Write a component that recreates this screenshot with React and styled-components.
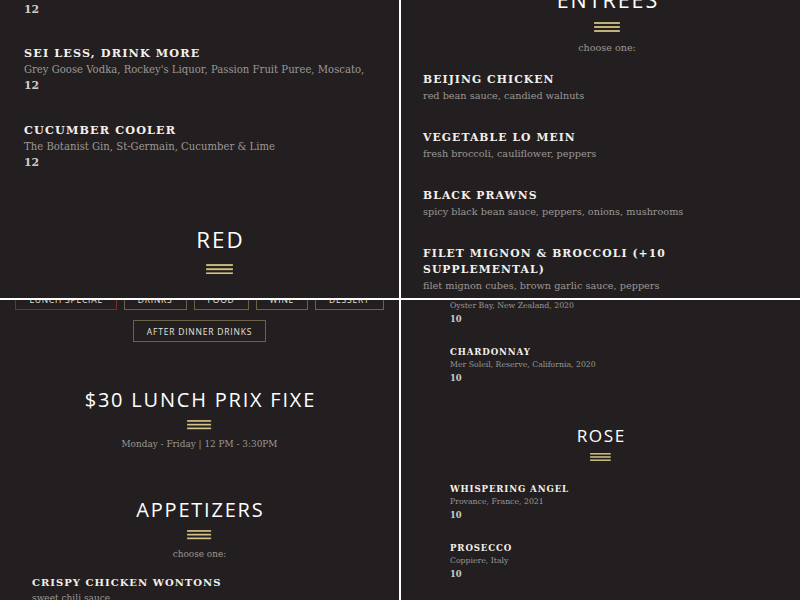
import React from 'react'
import styled, {createGlobalStyle} from 'styled-components'

const GlobalStyle = createGlobalStyle`
    html, body {
        margin: 0;
        padding: 0;
        background: #ffffff;
        overflow: hidden;
    }
    #root {
        width: 800px;
        height: 600px;
    }
`;

// each panel is one crop of the same long menu page, at its own scroll and scale
const panels = {
    drinks: {unit: 10.4, width: 439, scroll: 1.5, inset: 24, gap: 5.15},
    entrees: {unit: 10, width: 412, scroll: -15, inset: 22, gap: 4.85},
    lunch: {unit: 9.3, width: 399, scroll: -12, inset: 32, gap: 4.75},
    wine: {unit: 8, width: 399, scroll: 0, inset: 49, gap: 4.85},
};

const navLinks = [
    {label: 'Lunch Special', active: true},
    {label: 'Drinks'},
    {label: 'Food'},
    {label: 'Wine'},
    {label: 'Dessert'},
    {label: 'After Dinner Drinks'},
];

const Ornament = () => (
    <OrnamentSvg viewBox="0 0 26 10" preserveAspectRatio="none">
        {[0, 4, 8].map(y => (
            <g key={y}>
                <rect x="0" y={y} width="26" height="2" fill="#a3905a"/>
                <rect x="0.5" y={y + 0.5} width="25" height="1" fill="#ddcf9a"/>
            </g>
        ))}
    </OrnamentSvg>
);

const MenuItem = ({name, desc, price}) => (
    <Item>
        {name && <Name>{name}</Name>}
        {desc && <Desc>{desc}</Desc>}
        {price && <Price>{price}</Price>}
    </Item>
);

const ItemList = ({inset, spacing, items}) => (
    <List $inset={inset} $spacing={spacing}>
        {items.map((it, i) => <MenuItem key={i} {...it}/>)}
    </List>
);

const Heading = ({title, note, gap}) => (
    <Section $gap={gap}>
        <Title>{title}</Title>
        <Ornament/>
        {note && <Note>{note}</Note>}
    </Section>
);

export default function App() {
    const {drinks, entrees, lunch, wine} = panels;
    return (
        <Board>
            <GlobalStyle/>

            <Panel $unit={drinks.unit}>
                <Page $width={drinks.width} $scroll={drinks.scroll}>
                    <ItemList inset={drinks.inset} spacing={0} items={[
                        {price: '12'},
                        {name: 'Sei Less, Drink More', desc: "Grey Goose Vodka, Rockey's Liquor, Passion Fruit Puree, Moscato,", price: '12'},
                        {name: 'Cucumber Cooler', desc: 'The Botanist Gin, St-Germain, Cucumber & Lime', price: '12'},
                    ]}/>
                    <Heading title="Red" gap={drinks.gap}/>
                </Page>
            </Panel>

            <Panel $unit={entrees.unit}>
                <Page $width={entrees.width} $scroll={entrees.scroll}>
                    <Heading title="Entrees" note="choose one:" gap={0}/>
                    <ItemList inset={entrees.inset} spacing={1.65} items={[
                        {name: 'Beijing Chicken', desc: 'red bean sauce, candied walnuts'},
                        {name: 'Vegetable Lo Mein', desc: 'fresh broccoli, cauliflower, peppers'},
                        {name: 'Black Prawns', desc: 'spicy black bean sauce, peppers, onions, mushrooms'},
                        {name: 'Filet Mignon & Broccoli (+10 Supplemental)', desc: 'filet mignon cubes, brown garlic sauce, peppers'},
                    ]}/>
                </Page>
            </Panel>

            <Panel $unit={lunch.unit}>
                <Page $width={lunch.width} $scroll={lunch.scroll}>
                    <Nav>
                        {navLinks.map(l => (
                            <NavButton key={l.label} $active={l.active}>{l.label}</NavButton>
                        ))}
                    </Nav>
                    <Heading title="$30 Lunch Prix Fixe" note="Monday - Friday | 12 PM - 3:30PM" gap={lunch.gap}/>
                    <Heading title="Appetizers" note="choose one:" gap={lunch.gap}/>
                    <ItemList inset={lunch.inset} spacing={1.5} items={[
                        {name: 'Crispy Chicken Wontons', desc: 'sweet chili sauce'},
                    ]}/>
                </Page>
            </Panel>

            <Panel $unit={wine.unit}>
                <Page $width={wine.width} $scroll={wine.scroll}>
                    <ItemList inset={wine.inset} spacing={0} items={[
                        {desc: 'Oyster Bay, New Zealand, 2020', price: '10'},
                        {name: 'Chardonnay', desc: 'Mer Soleil, Reserve, California, 2020', price: '10'},
                    ]}/>
                    <Heading title="Rose" gap={wine.gap}/>
                    <ItemList inset={wine.inset} spacing={2.8} items={[
                        {name: 'Whispering Angel', desc: 'Provance, France, 2021', price: '10'},
                        {name: 'Prosecco', desc: 'Coppiere, Italy', price: '10'},
                    ]}/>
                </Page>
            </Panel>
        </Board>
    )
}

const Board = styled.div`
    display: grid;
    grid-template-columns: 399px 399px;
    grid-template-rows: 298px 300px;
    gap: 2px;
    width: 800px;
    height: 600px;
    background: #ffffff;
`;

const Panel = styled.section`
    overflow: hidden;
    background: #231f20;
    font-size: ${p => p.$unit}px;
    font-family: "DejaVu Serif", "Liberation Serif", serif;
`;

const Page = styled.div`
    width: ${p => p.$width}px;
    margin-top: ${p => p.$scroll}px;
`;

const Section = styled.div`
    display: flex;
    flex-direction: column;
    align-items: center;
    padding-top: ${p => p.$gap}em;
`;

const Title = styled.h2`
    margin: 0;
    padding-left: 0.09em;
    font-family: "Open Sans", sans-serif;
    font-weight: 400;
    font-size: 2.15em;
    line-height: 1.36;
    letter-spacing: 0.09em;
    color: #ffffff;
    text-transform: uppercase;
`;

const OrnamentSvg = styled.svg`
    display: block;
    width: 2.6em;
    height: 1em;
    margin-top: 0.75em;
`;

const Note = styled.p`
    margin: 0.85em 0 0;
    font-size: 0.96em;
    line-height: 1.667;
    color: #9c9895;
`;

const List = styled.div`
    display: flex;
    flex-direction: column;
    gap: 2.6em;
    margin-top: ${p => p.$spacing}em;
    padding-left: ${p => p.$inset}px;
`;

const Item = styled.div`
    display: flex;
    flex-direction: column;
    align-items: flex-start;
`;

const Name = styled.h3`
    margin: 0;
    max-width: 27em;
    font-size: 1.08em;
    line-height: 1.48;
    font-weight: 700;
    letter-spacing: 0.1em;
    color: #f3f0eb;
    text-transform: uppercase;
`;

const Desc = styled.p`
    margin: 0;
    font-size: 0.97em;
    line-height: 1.65;
    color: #9c9895;
`;

const Price = styled.span`
    font-size: 1.05em;
    line-height: 1.52;
    font-weight: 700;
    color: #cfcbc7;
`;

const Nav = styled.nav`
    display: flex;
    flex-wrap: wrap;
    justify-content: center;
    gap: 10px 7px;
    padding: 0 8px;
`;

const NavButton = styled.button`
    height: 22px;
    padding: 0 13px;
    border: 1px solid ${p => p.$active ? '#7c2c37' : '#6b6247'};
    background: transparent;
    color: #e6e2dc;
    font-family: "Open Sans", sans-serif;
    font-size: 8.5px;
    letter-spacing: 0.8px;
    text-transform: uppercase;
    cursor: pointer;
`;
